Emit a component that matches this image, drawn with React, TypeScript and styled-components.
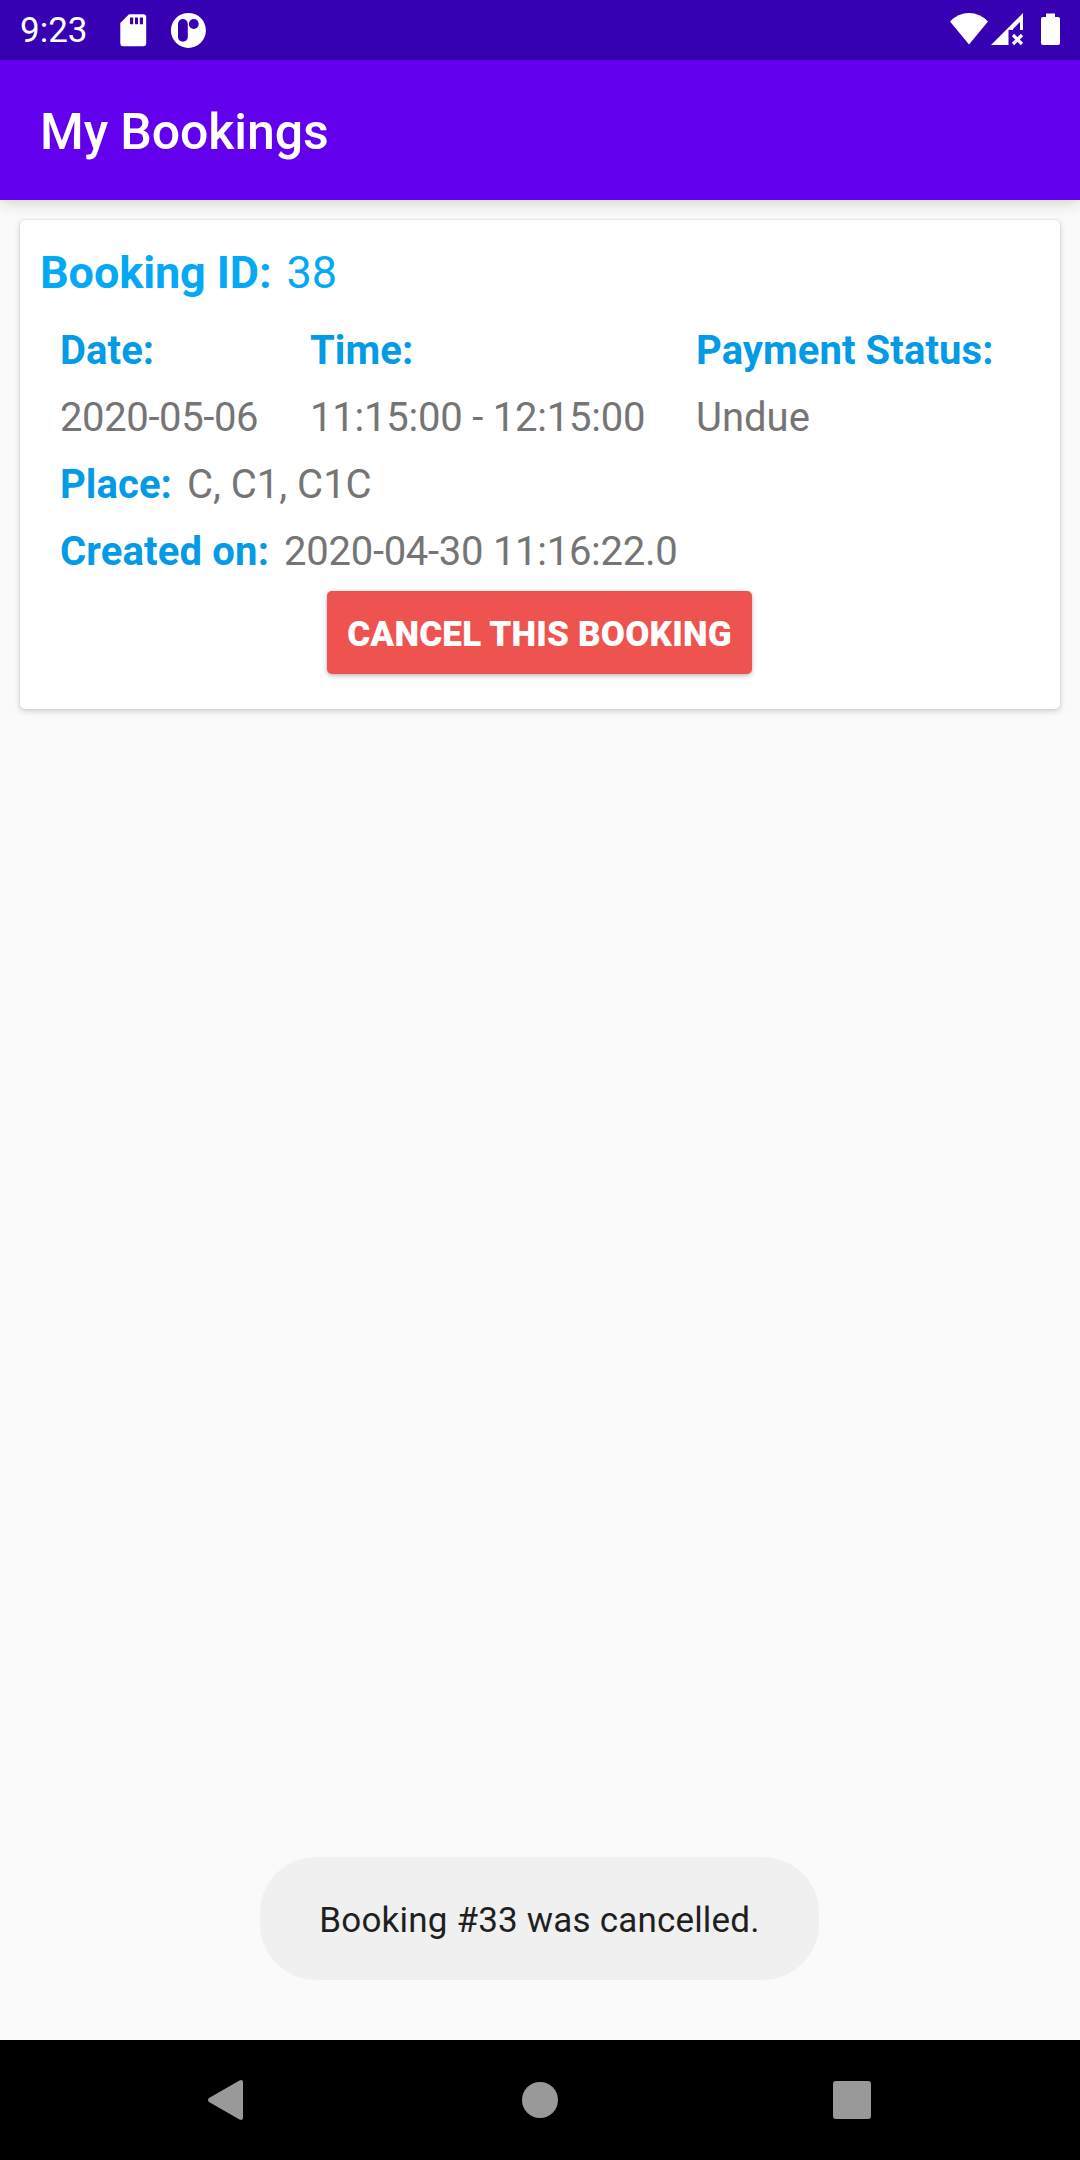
import React from "react";
import styled, { createGlobalStyle } from "styled-components";

const GlobalStyle = createGlobalStyle`
  * { box-sizing: border-box; }
  body { margin: 0; background: #fafafa; }
`;

const Screen = styled.div`
  display: flex;
  flex-direction: column;
  width: 1080px;
  height: 2160px;
  overflow: hidden;
  background: #fafafa;
  font-family: Roboto, "Liberation Sans", sans-serif;
`;

const StatusBar = styled.header`
  display: flex;
  align-items: center;
  justify-content: space-between;
  height: 60px;
  padding: 0 20px;
  background: #3700b3;
  flex: none;
`;

const StatusGroup = styled.div`
  display: flex;
  align-items: center;
  height: 60px;
`;

const Clock = styled.span`
  width: 90px;
  padding-top: 2px;
  font-size: 35px;
  line-height: 60px;
  color: #fff;
`;

const AppBar = styled.div`
  display: flex;
  align-items: center;
  height: 140px;
  padding: 3px 40px 0;
  background: #6200ee;
  box-shadow: 0 3px 14px rgba(0, 0, 0, 0.16);
  flex: none;
`;

const Title = styled.h1`
  margin: 0;
  font-size: 50px;
  font-weight: 500;
  letter-spacing: -0.1px;
  line-height: 60px;
  color: #fff;
`;

const Content = styled.main`
  display: flex;
  flex: 1;
  flex-direction: column;
  justify-content: space-between;
  padding: 20px 20px 60px;
`;

const Card = styled.section`
  display: flex;
  flex-direction: column;
  height: 489px;
  padding: 20px;
  border-radius: 5px;
  background: #fff;
  box-shadow: 0 2px 6px rgba(0, 0, 0, 0.18), 0 0 2px rgba(0, 0, 0, 0.14);
`;

const BookingHeading = styled.div`
  display: flex;
  gap: 15px;
  height: 67px;
  font-size: 45px;
  line-height: 66px;
  color: #03a9f4;
`;

const Details = styled.div`
  display: flex;
  flex-direction: column;
  padding: 10px 20px 0;
`;

const Columns = styled.div`
  display: grid;
  grid-template-columns: 250px 386px auto;
`;

const Column = styled.div`
  display: flex;
  flex-direction: column;
`;

const Row = styled.div`
  display: flex;
  gap: 15px;
`;

const Label = styled.span<{ $tracking?: number }>`
  font-size: 40px;
  font-weight: 700;
  letter-spacing: ${({ $tracking = 0.08 }) => $tracking}px;
  line-height: 67px;
  color: #039be5;
  white-space: nowrap;
`;

const Value = styled.span<{ $tracking?: number }>`
  font-size: 40px;
  letter-spacing: ${({ $tracking = 0 }) => $tracking}px;
  line-height: 67px;
  color: #757575;
  white-space: nowrap;
`;

const Strong = styled.span`
  font-weight: 700;
  letter-spacing: -0.1px;
`;

const CancelButton = styled.button`
  align-self: center;
  width: 425px;
  height: 83px;
  margin: 6px 1px 0 0;
  padding: 4px 0 0;
  border: 0;
  border-radius: 5px;
  background: #ef5350;
  box-shadow: 0 2px 5px rgba(0, 0, 0, 0.24), 0 0 2px rgba(0, 0, 0, 0.12);
  font-family: inherit;
  font-size: 35px;
  font-weight: 900;
  letter-spacing: 0.2px;
  line-height: 60px;
  color: #fff;
  white-space: nowrap;
`;

const Toast = styled.div`
  display: flex;
  align-items: center;
  align-self: center;
  justify-content: center;
  width: 559px;
  height: 123px;
  margin-right: 1px;
  padding-top: 4px;
  border-radius: 56px;
  background: #f0f0f0;
  font-size: 35px;
  line-height: 41px;
  letter-spacing: 0.19px;
  color: #1f1f1f;
  white-space: nowrap;
`;

const NavBar = styled.nav`
  display: flex;
  align-items: center;
  justify-content: space-between;
  height: 120px;
  padding: 0 198px;
  background: #000;
  flex: none;
`;

const Icon = styled.svg`
  display: block;
  flex: none;
`;

function LeftIcons() {
  return (
    <Icon width="100" height="60" viewBox="110 0 100 60" fill="#fff">
      <path
        fillRule="evenodd"
        d="M129 14.300H143.200Q146.200 14.300 146.200 17.300V43.200Q146.200 46.200 143.200 46.200H123.300Q120.300 46.200 120.300 43.200V23ZM130 17.500V24.300H133.200V17.500ZM135 17.500V24.300H138V17.500ZM139.800 17.500V24.300H143V17.500Z"
      />
      <circle cx="188.400" cy="30.400" r="17.500" />
      <rect x="178" y="19" width="9.800" height="22.800" rx="4.900" fill="#3700b3" />
      <circle cx="193.800" cy="24" r="4.900" fill="#3700b3" />
    </Icon>
  );
}

function RightIcons() {
  return (
    <Icon width="120" height="60" viewBox="940 0 120 60" fill="#fff">
      <path d="M950 21.500Q958 13 969 13Q980 13 988 21.500L969 44.500Z" />
      <path
        fillRule="evenodd"
        d="M1023 13V30H1020V22L1013 29V30H1008.500V45H991Z"
      />
      <path d="M1013 35L1022 44M1022 35L1013 44" stroke="#fff" strokeWidth="3.200" />
      <path d="M1046 13.500H1055V17H1058Q1060 17 1060 19V43Q1060 45 1058 45H1043Q1041 45 1041 43V19Q1041 17 1043 17H1046Z" />
    </Icon>
  );
}

export default function App() {
  return (
    <>
      <GlobalStyle />
      <Screen>
        <StatusBar>
          <StatusGroup>
            <Clock>9:23</Clock>
            <LeftIcons />
          </StatusGroup>
          <RightIcons />
        </StatusBar>
        <AppBar>
          <Title>My Bookings</Title>
        </AppBar>
        <Content>
          <Card>
            <BookingHeading>
              <Strong>Booking ID:</Strong>
              <span>38</span>
            </BookingHeading>
            <Details>
              <Columns>
                <Column>
                  <Label>Date:</Label>
                  <Value $tracking={-0.38}>2020-05-06</Value>
                </Column>
                <Column>
                  <Label>Time:</Label>
                  <Value $tracking={-0.22}>11:15:00 - 12:15:00</Value>
                </Column>
                <Column>
                  <Label>Payment Status:</Label>
                  <Value>Undue</Value>
                </Column>
              </Columns>
              <Row>
                <Label>Place:</Label>
                <Value>C, C1, C1C</Value>
              </Row>
              <Row>
                <Label $tracking={0.16}>Created on:</Label>
                <Value $tracking={-0.28}>2020-04-30 11:16:22.0</Value>
              </Row>
            </Details>
            <CancelButton>CANCEL THIS BOOKING</CancelButton>
          </Card>
          <Toast>Booking #33 was cancelled.</Toast>
        </Content>
        <NavBar>
          <Icon width="60" height="60" viewBox="0 0 60 60" fill="#999">
            <path d="M11 28L41.500 10.500Q45 9 45 12.500V47.500Q45 51 41.500 49.500L11 32Q9 30 11 28Z" />
          </Icon>
          <Icon width="60" height="60" viewBox="0 0 60 60" fill="#999">
            <circle cx="30" cy="30" r="18" />
          </Icon>
          <Icon width="60" height="60" viewBox="0 0 60 60" fill="#999">
            <rect x="11" y="11" width="38" height="38" rx="3" />
          </Icon>
        </NavBar>
      </Screen>
    </>
  );
}
